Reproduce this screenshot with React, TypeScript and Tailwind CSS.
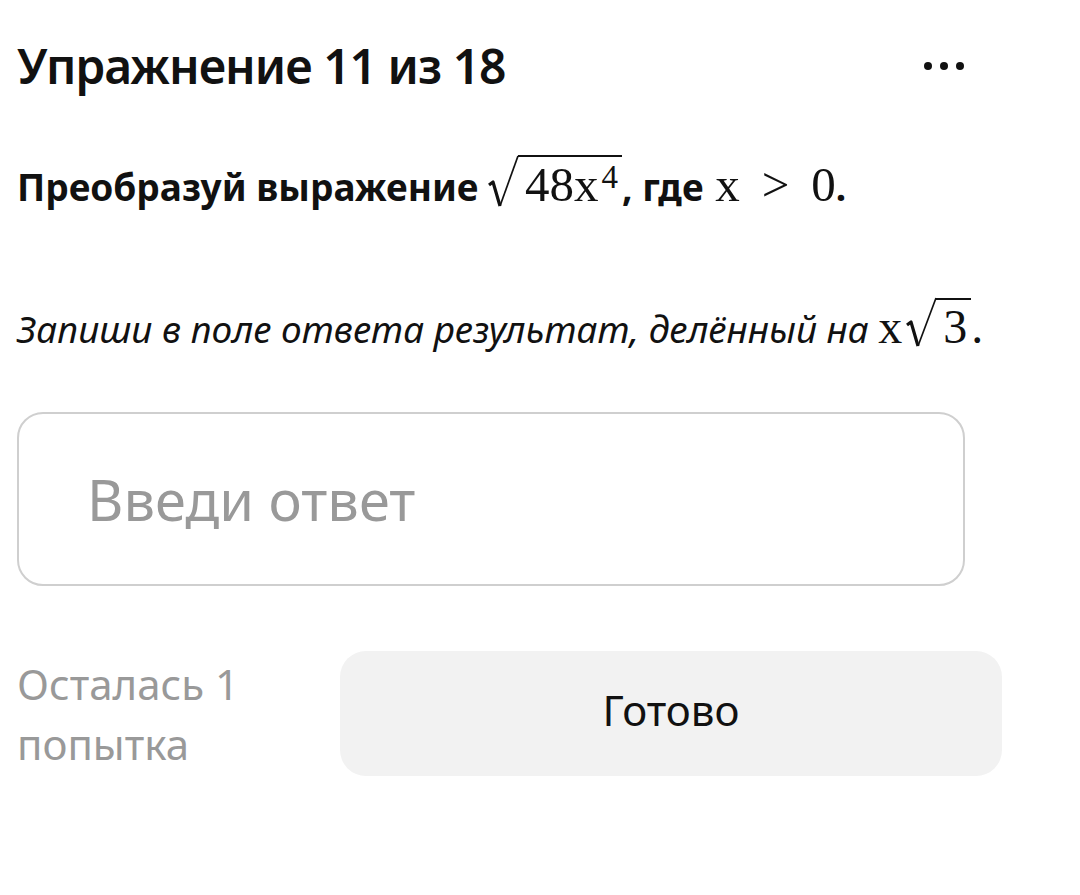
import React from "react";

const sans = { fontFamily: '"Noto Sans", "Open Sans", sans-serif' };
const serif = { fontFamily: '"Liberation Serif", "DejaVu Serif", serif' };

// square-root sign: the surd is drawn, the bar is the radicand's top border
function Radical({ children, h }: { children: React.ReactNode; h: number }) {
  return (
    <span className="relative inline-block pl-[30px]">
      <svg width="31" height={h} viewBox={`0 0 31 ${h}`} className="absolute left-0 top-0" aria-hidden>
        <path d={`M1 ${h - 23} L5 ${h - 26} L12 ${h - 2}`} fill="none" stroke="#111" strokeWidth="3.2" strokeLinejoin="round" />
        <path d={`M12 ${h - 2} L30 1`} fill="none" stroke="#111" strokeWidth="1.7" />
      </svg>
      <span className="inline-block border-t-2 border-[#111] pt-[3px] pl-[7px] pr-[4px] leading-none">{children}</span>
    </span>
  );
}

export default function App() {
  return (
    <div className="w-[1080px] h-[895px] bg-white text-[#111]" style={sans}>
      <div className="pl-[17px] pt-[36px]">
        <div className="flex items-center justify-between w-[962px]">
          <h1 className="text-[48px] font-semibold leading-[60px] tracking-[-1px]">Упражнение 11 из 18</h1>
          <div className="flex gap-[8px] pr-[15px]">
            <span className="w-[8px] h-[8px] rounded-full bg-[#111]" />
            <span className="w-[8px] h-[8px] rounded-full bg-[#111]" />
            <span className="w-[8px] h-[8px] rounded-full bg-[#111]" />
          </div>
        </div>

        <p className="mt-[59px] text-[37px] font-bold leading-[60px] flex items-baseline">
          <span>Преобразуй выражение&nbsp;</span>
          <span style={serif} className="font-normal text-[49px]">
            <Radical h={53}>
              48x<sup className="text-[33px] relative -top-[13px] ml-[3px]">4</sup>
            </Radical>
          </span>
          <span>, где&nbsp;</span>
          <span style={serif} className="font-normal text-[49px] flex items-baseline ml-[2px]">
            <span>x</span>
            <span className="mx-[22px]">&gt;</span>
            <span>0</span>
          </span>
          <span>.</span>
        </p>

        <p className="mt-[80px] text-[37px] italic leading-[60px] flex items-baseline">
          <span>Запиши в поле ответа результат, делённый на&nbsp;</span>
          <span style={serif} className="not-italic text-[48px] flex items-baseline">
            <span className="mr-[4px]">x</span>
            <Radical h={51}>3</Radical>
            <span>.</span>
          </span>
        </p>

        <div className="mt-[53px] w-[948px] h-[174px] border-2 border-[#cfcfcf] rounded-[26px] flex items-center pl-[68px]">
          <span className="text-[56px] text-[#999] leading-none">Введи ответ</span>
        </div>

        <div className="mt-[65px] flex items-center w-[985px]">
          <div className="w-[323px] text-[42px] leading-[60px] text-[#999]">
            Осталась 1
            <br />
            попытка
          </div>
          <button className="flex-1 h-[125px] rounded-[26px] bg-[#f2f2f2] text-[42px] text-[#111] flex items-center justify-center pb-[8px]">
            Готово
          </button>
        </div>
      </div>
    </div>
  );
}
